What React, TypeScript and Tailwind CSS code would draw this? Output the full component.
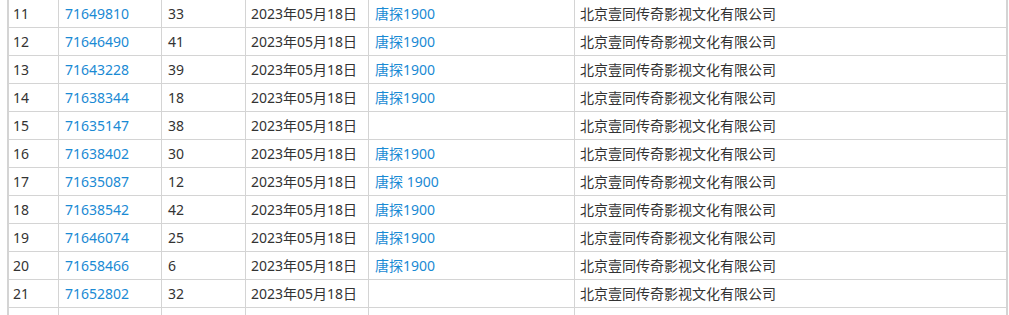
import React from "react";

const rows: [string, string, string, string, string, string][] = [
  ["11", "71649810", "33", "2023年05月18日", "唐探1900", "北京壹同传奇影视文化有限公司"],
  ["12", "71646490", "41", "2023年05月18日", "唐探1900", "北京壹同传奇影视文化有限公司"],
  ["13", "71643228", "39", "2023年05月18日", "唐探1900", "北京壹同传奇影视文化有限公司"],
  ["14", "71638344", "18", "2023年05月18日", "唐探1900", "北京壹同传奇影视文化有限公司"],
  ["15", "71635147", "38", "2023年05月18日", "", "北京壹同传奇影视文化有限公司"],
  ["16", "71638402", "30", "2023年05月18日", "唐探1900", "北京壹同传奇影视文化有限公司"],
  ["17", "71635087", "12", "2023年05月18日", "唐探 1900", "北京壹同传奇影视文化有限公司"],
  ["18", "71638542", "42", "2023年05月18日", "唐探1900", "北京壹同传奇影视文化有限公司"],
  ["19", "71646074", "25", "2023年05月18日", "唐探1900", "北京壹同传奇影视文化有限公司"],
  ["20", "71658466", "6", "2023年05月18日", "唐探1900", "北京壹同传奇影视文化有限公司"],
  ["21", "71652802", "32", "2023年05月18日", "", "北京壹同传奇影视文化有限公司"],
  ["", "", "", "", "", ""],
];

const cell = "h-[27px] flex items-center border-r border-[#d4d4d4] whitespace-nowrap overflow-hidden";

export default function App() {
  return (
    <div
      className="w-[1009px] h-[315px] overflow-hidden bg-white text-[14px] text-[#333]"
      style={{ fontFamily: '"Noto Sans", "Noto Sans CJK SC", sans-serif' }}
    >
      <div className="ml-[7px] w-[1001px] border-l-2 border-r-2 border-[#d4d4d4]">
        {rows.map((r, i) => (
          <div key={i} className="flex border-b border-[#d4d4d4]">
            <div className={`${cell} w-[50px] pl-[4px]`}>{r[0]}</div>
            <div className={`${cell} w-[103px] pl-[6px] text-[#1a8ad4]`}>{r[1]}</div>
            <div className={`${cell} w-[84px] pl-[6px]`}>{r[2]}</div>
            <div className={`${cell} w-[123px] pl-[5px]`}>{r[3]}</div>
            <div className={`${cell} w-[206px] pl-[6px] text-[#1a8ad4]`}>{r[4]}</div>
            <div className="h-[27px] flex items-center flex-1 pl-[5px] whitespace-nowrap">{r[5]}</div>
          </div>
        ))}
      </div>
    </div>
  );
}
